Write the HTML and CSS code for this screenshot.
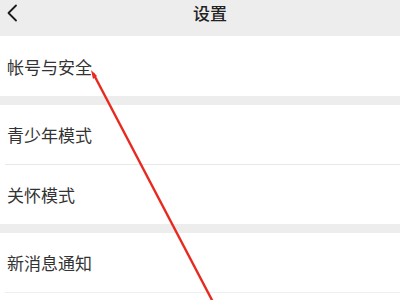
FILE: index.html
```html
<!DOCTYPE html>
<html lang="zh">
<head>
<meta charset="utf-8">
<link rel="stylesheet" href="styles.css">
</head>
<body>
<div class="page">
  <header class="nav">
    <svg class="back" width="12" height="18" viewBox="0 0 12 18"><path d="M10 1.5 L2.5 9 L10 16.5" fill="none" stroke="#1a1a1a" stroke-width="1.8" stroke-linecap="round" stroke-linejoin="round"/></svg>
    <div class="title">设置</div>
  </header>
  <section class="group">
    <div class="row">帐号与安全</div>
  </section>
  <section class="group">
    <div class="row">青少年模式</div>
    <div class="row">关怀模式</div>
  </section>
  <section class="group">
    <div class="row">新消息通知</div>
    <div class="row"></div>
  </section>
  <svg class="annot" width="400" height="300" viewBox="0 0 400 300">
    <line x1="93" y1="73" x2="213" y2="302" stroke="#e8291f" stroke-width="2.4"/>
    <path d="M91 70 L97 76 L93 79 Z" fill="#e8291f"/>
  </svg>
</div>
</body>
</html>
```
FILE: styles.css
```css
html, body {
  margin: 0;
  padding: 0;
  background: #ededed;
}
.page {
  position: relative;
  width: 400px;
  height: 300px;
  overflow: hidden;
  font-family: "Noto Sans CJK SC", "Noto Sans", sans-serif;
  color: #333;
}
.nav {
  height: 36px;
  display: flex;
  align-items: center;
  justify-content: center;
  position: relative;
  background: #ededed;
}
.back {
  position: absolute;
  left: 6px;
  top: 4px;
}
.title {
  font-size: 17px;
  font-weight: 500;
  color: #222;
  margin-left: 20px;
  margin-top: -12px;
}
.group {
  background: #fff;
  margin-bottom: 9px;
}
.row {
  height: 59px;
  display: flex;
  align-items: center;
  font-size: 17px;
  color: #333;
  border-top: 1px solid #e8e8e8;
  margin-left: 5px;
  padding-left: 2px;
}
.group .row:first-child {
  border-top: none;
  height: 60px;
}
.group:nth-of-type(2) .row:first-child,
.group:nth-of-type(3) .row:first-child {
  height: 59px;
}
.group:nth-of-type(3) .row:last-child {
  border-top: 1px solid #eeeeee;
}
.annot {
  position: absolute;
  left: 0;
  top: 0;
}
```
